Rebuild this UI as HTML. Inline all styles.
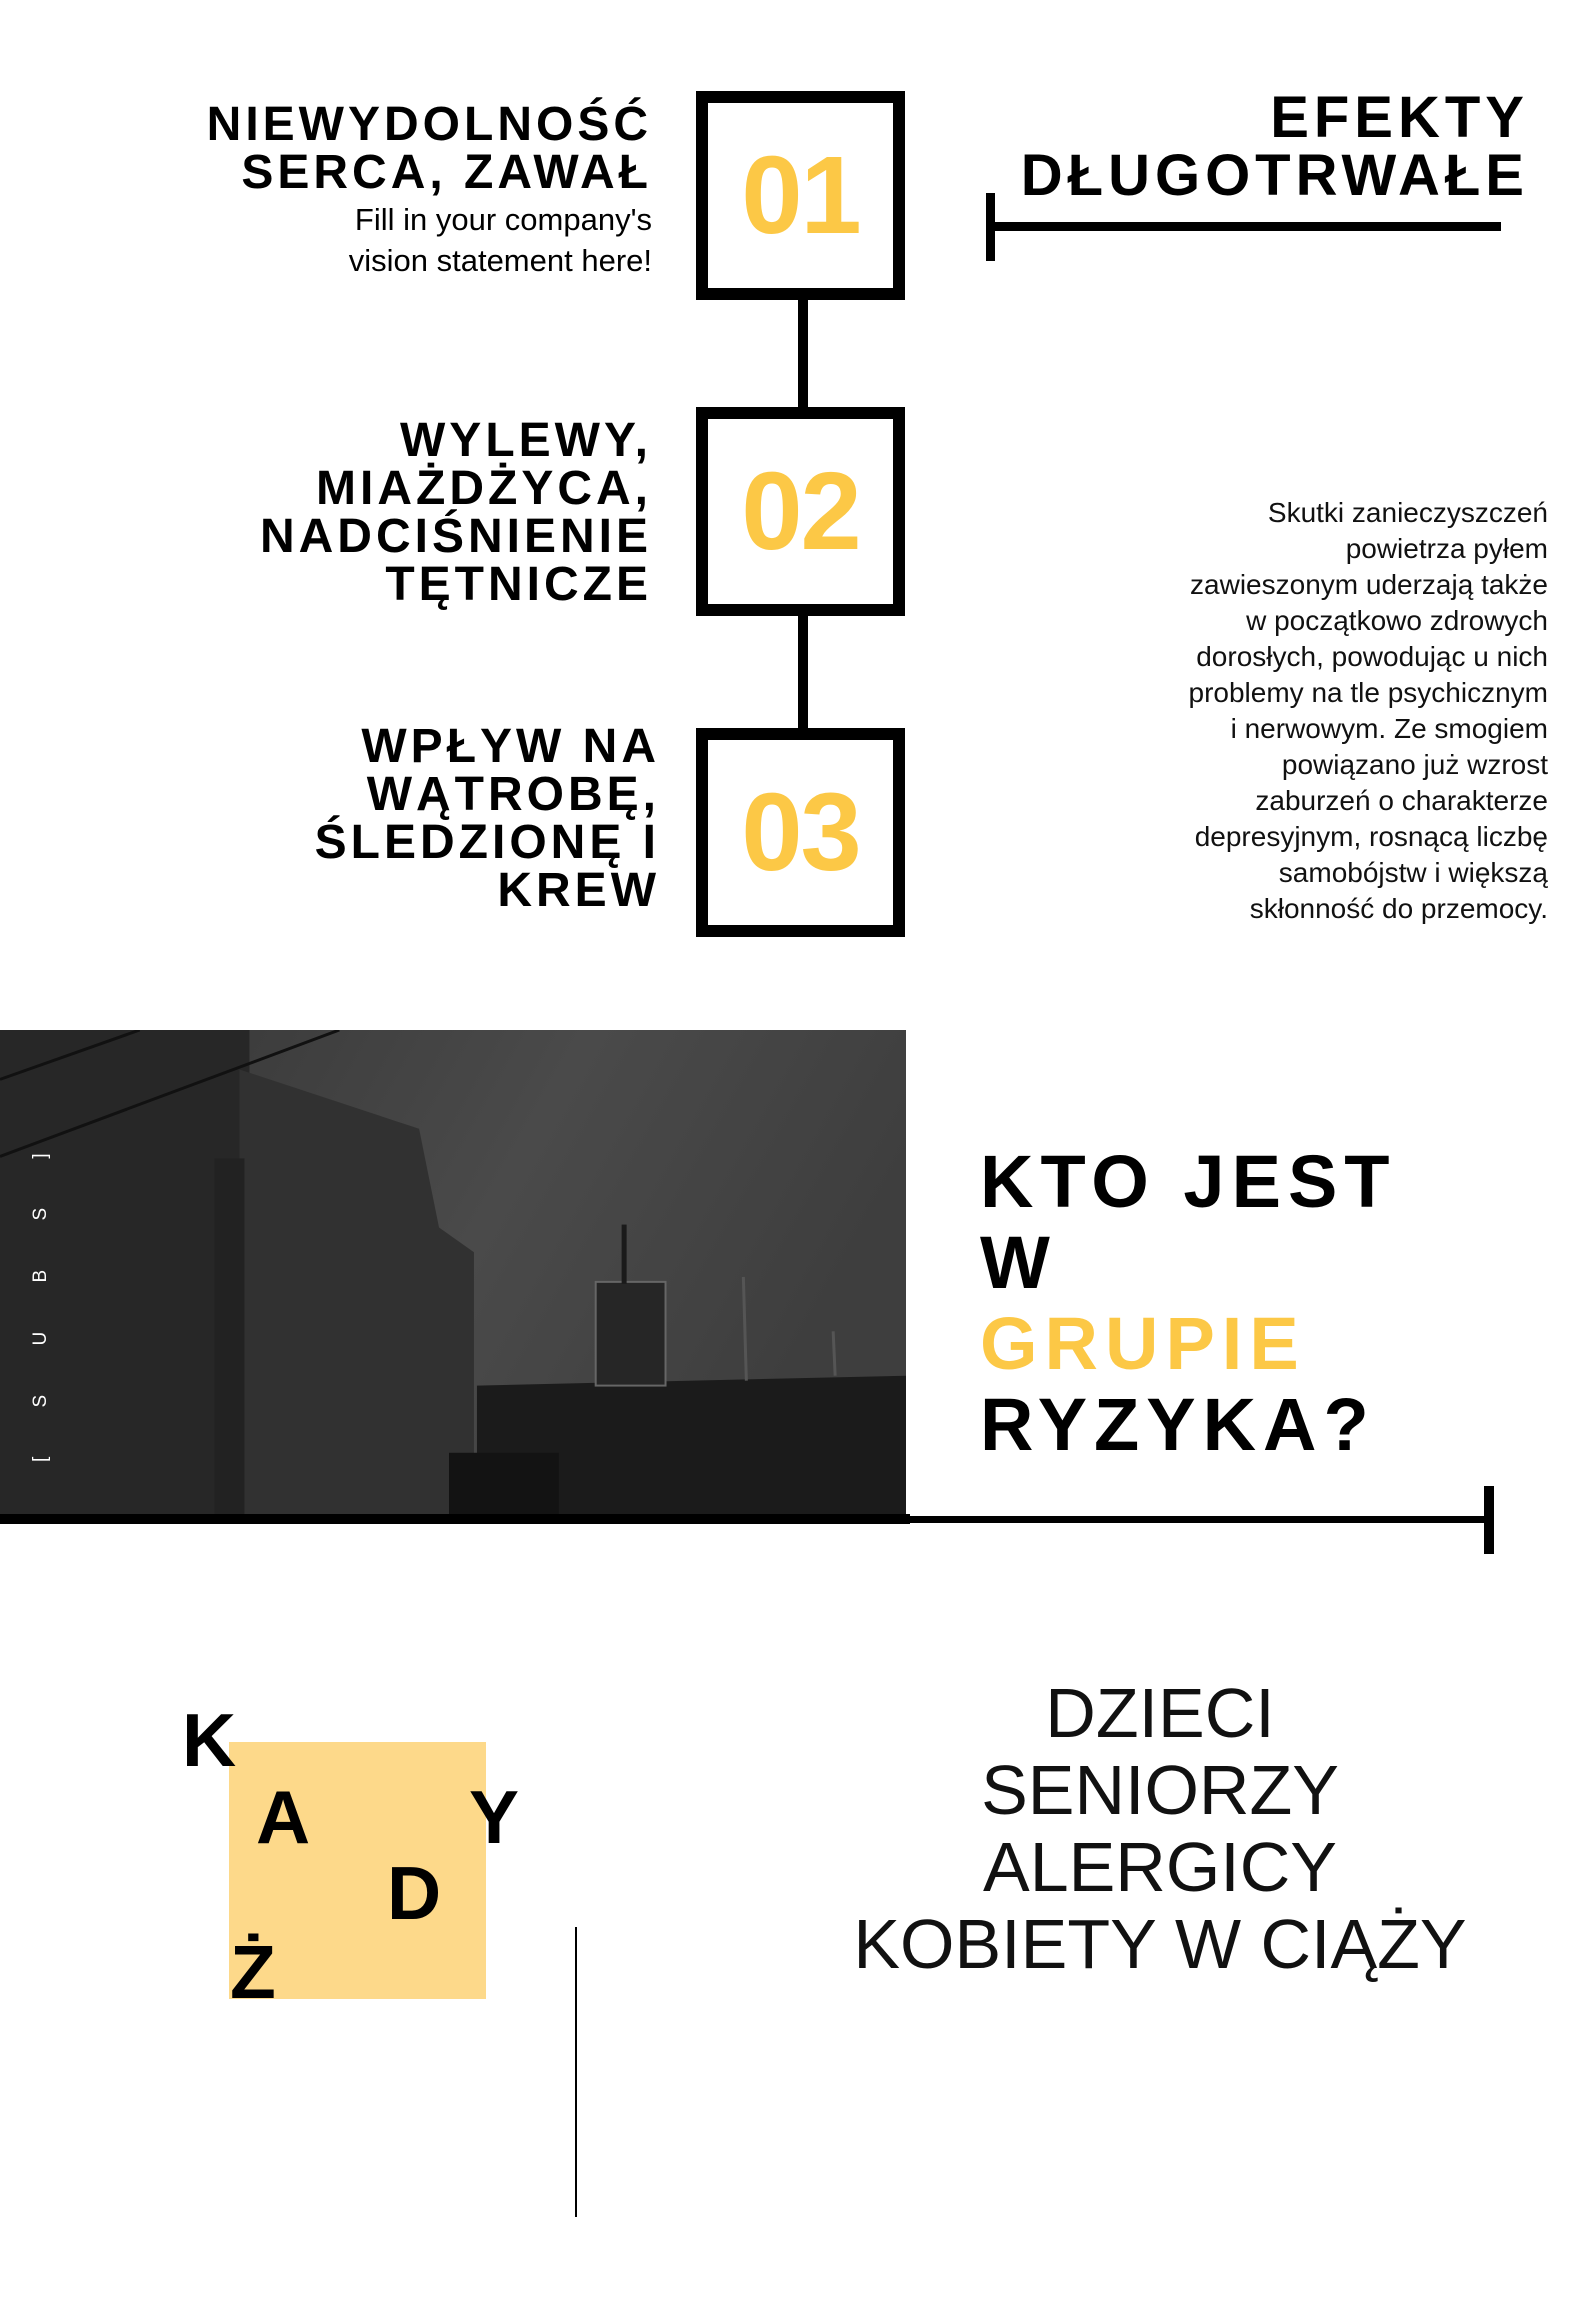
<!DOCTYPE html>
<html><head><meta charset="utf-8"><style>
*{margin:0;padding:0;box-sizing:border-box}
body{width:1587px;height:2297px;background:#fff;position:relative;overflow:hidden;font-family:"Liberation Sans",sans-serif;color:#000}
.a{position:absolute;white-space:nowrap}
.h{font-weight:bold;font-size:48px;letter-spacing:4px;line-height:48px;text-align:right}
.box{position:absolute;left:696px;width:209px;height:209px;border:12px solid #000;display:flex;align-items:center;justify-content:center;color:#fcc846;font-weight:bold;font-size:110px;letter-spacing:-2px}
.p{right:39px;text-align:right;font-size:28px;line-height:36px;color:#111}
.big{font-weight:900;font-size:74px;letter-spacing:7px;line-height:81px;left:980px}
.lt{font-weight:900;font-size:75px;line-height:75px}
.list{left:745px;width:830px;text-align:center;font-size:70px;line-height:77px;color:#111}
</style></head><body>

<div class="a h" style="right:935px;top:101px">NIEWYDOLNOŚĆ</div>
<div class="a h" style="right:935px;top:149px">SERCA, ZAWAŁ</div>
<div class="a" style="right:935px;top:199px;font-size:31px;line-height:41px;text-align:right">Fill in your company's<br>vision statement here!</div>

<div class="a h" style="right:935px;top:417px">WYLEWY,<br>MIAŻDŻYCA,<br>NADCIŚNIENIE<br>TĘTNICZE</div>
<div class="a h" style="right:927px;top:723px">WPŁYW NA<br>WĄTROBĘ,<br>ŚLEDZIONĘ I<br>KREW</div>

<div class="a" style="left:798px;top:295px;width:10px;height:120px;background:#000"></div>
<div class="a" style="left:798px;top:610px;width:10px;height:125px;background:#000"></div>
<div class="box" style="top:91px">01</div>
<div class="box" style="top:407px">02</div>
<div class="box" style="top:728px">03</div>

<div class="a" style="right:58px;top:89px;font-weight:bold;font-size:58px;letter-spacing:5px;line-height:58px;text-align:right">EFEKTY<br>DŁUGOTRWAŁE</div>
<div class="a" style="left:986px;top:222px;width:515px;height:9px;background:#000"></div>
<div class="a" style="left:986px;top:193px;width:9px;height:68px;background:#000"></div>

<div class="a p" style="top:495px">Skutki zanieczyszczeń<br>powietrza pyłem<br>zawieszonym uderzają także<br>w początkowo zdrowych<br>dorosłych, powodując u nich<br>problemy na tle psychicznym<br>i nerwowym. Ze smogiem<br>powiązano już wzrost<br>zaburzeń o charakterze<br>depresyjnym, rosnącą liczbę<br>samobójstw i większą<br>skłonność do przemocy.</div>

<svg class="a" style="left:0;top:1030px" width="906" height="484" viewBox="0 0 908 490" preserveAspectRatio="none">
<defs><linearGradient id="s" x1="0" y1="0" x2="1" y2="0.3"><stop offset="0" stop-color="#333"/><stop offset="0.6" stop-color="#4a4a4a"/><stop offset="1" stop-color="#3e3e3e"/></linearGradient></defs>
<rect width="908" height="490" fill="url(#s)"/>
<rect x="0" y="0" width="250" height="490" fill="#272727"/>
<polygon points="240,40 420,100 440,200 475,225 475,490 240,490" fill="#313131"/>
<rect x="215" y="130" width="30" height="360" fill="#222"/>
<polygon points="478,360 908,350 908,490 478,490" fill="#1b1b1b"/>
<rect x="450" y="428" width="110" height="62" fill="#131313"/>
<rect x="597" y="255" width="70" height="105" fill="#262626" stroke="#666" stroke-width="2"/>
<rect x="623" y="197" width="5" height="60" fill="#1a1a1a"/>
<path d="M0,50 L140,0 M0,128 L340,0" stroke="#111" stroke-width="3" fill="none"/>
<path d="M745,250 L748,355 M835,305 L837,350" stroke="#555" stroke-width="3"/>
</svg>
<div class="a" style="left:30px;top:1462px;transform:rotate(-90deg);transform-origin:0 0;color:#fff;font-size:19px;letter-spacing:22px;width:280px">[ S U B S ]</div>
<div class="a" style="left:0;top:1514px;width:910px;height:10px;background:#000"></div>
<div class="a" style="left:905px;top:1516px;width:585px;height:7px;background:#000"></div>
<div class="a" style="left:1484px;top:1486px;width:10px;height:68px;background:#000"></div>

<div class="a big" style="top:1141px">KTO JEST<br>W<br><span style="color:#fcc846">GRUPIE</span><br>RYZYKA?</div>

<div class="a" style="left:229px;top:1742px;width:257px;height:257px;background:#fdd98a"></div>
<div class="a lt" style="left:182px;top:1703px">K</div>
<div class="a lt" style="left:256px;top:1780px">A</div>
<div class="a lt" style="left:469px;top:1780px">Y</div>
<div class="a lt" style="left:387px;top:1856px">D</div>
<div class="a lt" style="left:230px;top:1935px">Ż</div>
<div class="a" style="left:575px;top:1927px;width:2px;height:290px;background:#000"></div>

<div class="a list" style="top:1675px">DZIECI<br>SENIORZY<br>ALERGICY<br>KOBIETY W CIĄŻY</div>
</body></html>
